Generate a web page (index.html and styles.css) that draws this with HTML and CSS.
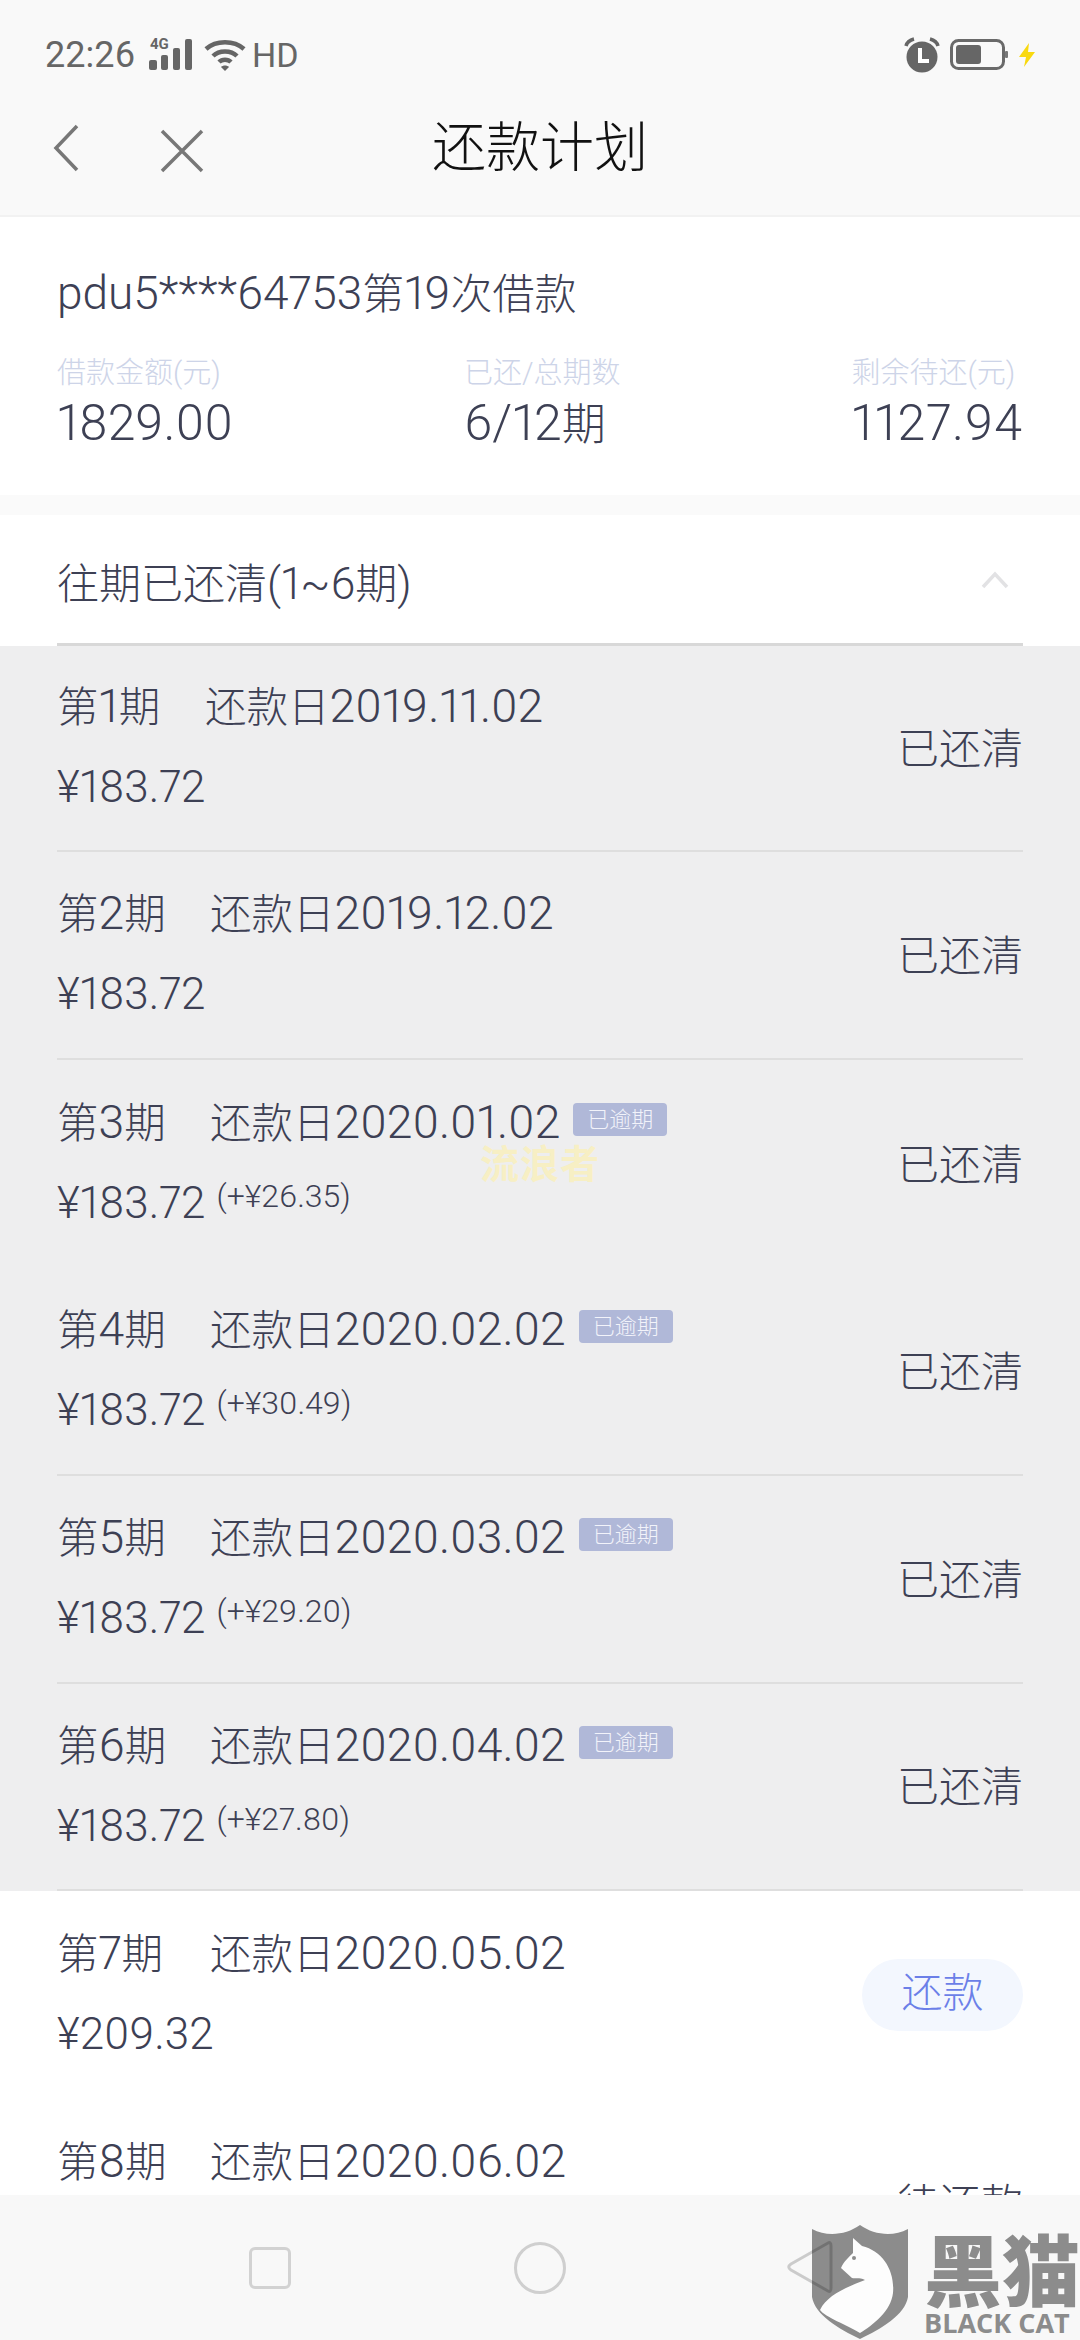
FILE: index.html
```html
<!DOCTYPE html>
<html>
<head>
	<meta charset="utf-8">
	<title>还款计划</title>
	<link rel="stylesheet" href="styles.css">
</head>
<body>
	<header class="top">
		<div class="status">
			<div class="status-left">
				<span class="time">22:26</span>
				<span class="signal">
					<span class="net">4G</span>
					<svg width="46" height="32" viewBox="0 0 46 32">
						<rect x="1" y="21" width="8" height="10" rx="2" fill="#666"/>
						<rect x="13" y="16" width="7" height="15" rx="2" fill="#666"/>
						<rect x="25" y="9" width="7" height="22" rx="2" fill="#666"/>
						<rect x="37" y="0" width="7" height="31" rx="2" fill="#666"/>
					</svg>
				</span>
				<svg class="wifi" width="42" height="32" viewBox="0 0 42 32">
					<g fill="none" stroke="#666" stroke-width="4.5">
						<path d="M2 10 C12 1 30 1 40 10"/>
						<path d="M9 17 C15 11 27 11 33 17"/>
						<path d="M15 23 C18 20 24 20 27 23"/>
					</g>
					<path d="M17 28 L21 32 L25 28 C23 26 19 26 17 28 Z" fill="#666"/>
				</svg>
				<span class="hd">HD</span>
			</div>
			<div class="status-right">
				<svg width="38" height="36" viewBox="0 0 38 36">
					<circle cx="19" cy="20" r="15.5" fill="#666"/>
					<path d="M3 9 C4 5 7 3 11 2 M35 9 C34 5 31 3 27 2" fill="none" stroke="#666" stroke-width="3.5"/>
					<path d="M17 11 V24 H26" fill="none" stroke="#fff" stroke-width="4"/>
				</svg>
				<svg class="batt" width="58" height="32" viewBox="0 0 58 32">
					<rect x="1.5" y="1.5" width="52" height="28" rx="7" fill="none" stroke="#6a6a6a" stroke-width="3"/>
					<rect x="6" y="6" width="25" height="19" rx="3" fill="#666"/>
					<rect x="55" y="12" width="3" height="7" rx="1" fill="#777"/>
				</svg>
				<svg class="bolt" width="18" height="24" viewBox="0 0 18 24">
					<path d="M11 0 L1 14 H8 L6 24 L17 9 H10 Z" fill="#f9d90f"/>
				</svg>
			</div>
		</div>
		<div class="nav-bar">
			<svg class="nav-icon" width="28" height="48" viewBox="0 0 28 48">
				<path d="M25 2 L4 24 L25 46" fill="none" stroke="#777" stroke-width="3.5"/>
			</svg>
			<svg class="nav-icon close" width="44" height="44" viewBox="0 0 44 44">
				<path d="M2 2 L42 42 M42 2 L2 42" fill="none" stroke="#777" stroke-width="3.5"/>
			</svg>
			<h1 class="title">还款计划</h1>
		</div>
	</header>

	<main class="content">
		<section class="loan">
			<h2 class="loan-name"><span class="num">pdu5****64753</span>第<span class="num">19</span>次借款</h2>
			<div class="loan-stats">
				<div class="stat">
					<div class="stat-label">借款金额(元)</div>
					<div class="stat-value">1829.00</div>
				</div>
				<div class="stat">
					<div class="stat-label">已还/总期数</div>
					<div class="stat-value">6/12<span class="unit">期</span></div>
				</div>
				<div class="stat">
					<div class="stat-label">剩余待还(元)</div>
					<div class="stat-value wide">1127.94</div>
				</div>
			</div>
		</section>

		<section class="plans">
			<div class="plans-head">
				<span>往期已还清<span class="num">(1~6</span>期<span class="num">)</span></span>
				<svg width="28" height="18" viewBox="0 0 28 18">
					<path d="M2 16 L14 3 L26 16" fill="none" stroke="#e2e2e4" stroke-width="3.5"/>
				</svg>
			</div>

			<div class="paid">
				<div class="watermark">流浪者</div>
				<div class="row first">
					<div>
						<div class="row-line"><span class="no-narrow">第<span class="num">1</span>期</span><span>还款日<span class="num">2019.11.02</span></span></div>
						<div class="row-line amount">¥183.72</div>
					</div>
					<span class="state">已还清</span>
				</div>
				<div class="row">
					<div>
						<div class="row-line"><span class="no">第<span class="num">2</span>期</span><span>还款日<span class="num">2019.12.02</span></span></div>
						<div class="row-line amount">¥183.72</div>
					</div>
					<span class="state">已还清</span>
				</div>
				<div class="row no-line">
					<div>
						<div class="row-line"><span class="no">第<span class="num">3</span>期</span><span>还款日<span class="num">2020.01.02</span></span><span class="late">已逾期</span></div>
						<div class="row-line amount">¥183.72<span class="extra">(+¥26.35)</span></div>
					</div>
					<span class="state">已还清</span>
				</div>
				<div class="row">
					<div>
						<div class="row-line"><span class="no">第<span class="num">4</span>期</span><span>还款日<span class="num">2020.02.02</span></span><span class="late">已逾期</span></div>
						<div class="row-line amount">¥183.72<span class="extra">(+¥30.49)</span></div>
					</div>
					<span class="state">已还清</span>
				</div>
				<div class="row">
					<div>
						<div class="row-line"><span class="no">第<span class="num">5</span>期</span><span>还款日<span class="num">2020.03.02</span></span><span class="late">已逾期</span></div>
						<div class="row-line amount">¥183.72<span class="extra">(+¥29.20)</span></div>
					</div>
					<span class="state">已还清</span>
				</div>
				<div class="row last">
					<div>
						<div class="row-line"><span class="no">第<span class="num">6</span>期</span><span>还款日<span class="num">2020.04.02</span></span><span class="late">已逾期</span></div>
						<div class="row-line amount">¥183.72<span class="extra">(+¥27.80)</span></div>
					</div>
					<span class="state">已还清</span>
				</div>
			</div>

			<div class="row no-line">
				<div>
					<div class="row-line"><span class="no">第<span class="num">7</span>期</span><span>还款日<span class="num">2020.05.02</span></span></div>
					<div class="row-line amount">¥209.32</div>
				</div>
				<span class="pay">还款</span>
			</div>
			<div class="row no-line">
				<div>
					<div class="row-line"><span class="no">第<span class="num">8</span>期</span><span>还款日<span class="num">2020.06.02</span></span></div>
					<div class="row-line amount">¥209.32</div>
				</div>
				<span class="state">待还款</span>
			</div>
		</section>
	</main>

	<footer class="sys-nav">
		<span class="sys-square"></span>
		<span class="sys-circle"></span>
		<div class="brand">
			<svg class="shield" width="98" height="114" viewBox="0 0 98 114">
				<path d="M1 4 C16 12 35 10 49 0 C63 10 82 12 97 4 V72 C94 90 70 104 49 114 C28 104 4 90 1 72 Z" fill="#8c8c8c"/>
				<path d="M42 13 L51 21 C72 26 84 46 82 68 C80 86 62 100 49 108 C36 100 14 92 9 85 C16 70 36 62 54 55 C48 52 44 54 41 53 L30 43 C33 36 38 32 42 28 Z" fill="#fdfdfd"/>
				<circle cx="43" cy="33" r="2" fill="#8c8c8c"/>
			</svg>
			<div class="brand-text">
				<div class="brand-cn">黑猫</div>
				<div class="brand-en">BLACK CAT</div>
			</div>
		</div>
		<svg class="sys-back" width="46" height="54" viewBox="0 0 46 54">
			<path d="M41 3 C43 2 44 3 44 6 V48 C44 51 43 52 41 51 L4 30 C1 28 1 26 4 24 Z" fill="none" stroke="#000" stroke-opacity=".18" stroke-width="3"/>
		</svg>
	</footer>
</body>
</html>
```

FILE: styles.css
```css
* {
	box-sizing: border-box;
}
html, body {
	margin: 0;
	height: 2340px;
}
body {
	display: flex;
	flex-direction: column;
	overflow: hidden;
	background: #fff;
	color: #3d4054;
	font-family: Roboto, "Noto Sans CJK SC", sans-serif;
	font-weight: 300;
	font-variant-numeric: proportional-nums;
}

/* top bars */
.top {
	flex: none;
	height: 217px;
	background: #f9f9f9;
	border-bottom: 2px solid #f2f2f2;
}
.status {
	display: flex;
	justify-content: space-between;
	align-items: center;
	height: 72px;
	padding: 37px 44px 0 45px;
	color: #666;
}
.status-left, .status-right {
	display: flex;
	align-items: center;
}
.time {
	font-size: 36px;
	font-weight: 400;
	line-height: 36px;
	margin-right: 13px;
}
.signal {
	position: relative;
	display: block;
	height: 32px;
}
.net {
	position: absolute;
	left: 2px;
	top: -2px;
	font-size: 15px;
	line-height: 15px;
	font-weight: 700;
}
.wifi {
	margin-left: 10px;
}
.hd {
	margin-left: 6px;
	font-size: 34px;
	line-height: 36px;
	font-weight: 400;
}
.batt {
	margin-left: 9px;
}
.bolt {
	margin-left: 10px;
}
.nav-bar {
	position: relative;
	display: flex;
	align-items: center;
	height: 143px;
	padding: 8px 0 0 52px;
}
.nav-icon {
	display: block;
}
.close {
	margin-left: 80px;
	margin-top: 6px;
}
.title {
	position: absolute;
	left: 0;
	right: 0;
	top: 47px;
	margin: 0;
	text-align: center;
	color: #111;
	font-size: 54px;
	font-weight: 300;
	line-height: 60px;
}

/* loan card */
.content {
	flex: 1;
	min-height: 0;
	overflow: hidden;
	background: #fafafa;
}
.loan {
	height: 278px;
	margin-bottom: 20px;
	padding: 50px 57px 0 57px;
	background: #fff;
}
.loan-name {
	margin: 0;
	font-size: 42px;
	font-weight: 300;
	line-height: 52px;
}
.loan-name .num {
	font-size: 46px;
}
.loan-stats {
	display: flex;
	justify-content: space-between;
	margin-top: 34px;
}
.stat-label {
	color: #cdd4e8;
	font-size: 29px;
	line-height: 36px;
}
.stat-value {
	margin-top: 4px;
	font-size: 50px;
	line-height: 56px;
}
.wide {
	letter-spacing: 1px;
}
.unit {
	font-size: 44px;
}

/* plan rows */
.plans {
	background: #fff;
}
.plans-head {
	display: flex;
	justify-content: space-between;
	align-items: center;
	height: 131px;
	margin: 0 57px;
	padding: 2px 14px 0 0;
	border-bottom: 3px solid #d8d8d8;
	font-size: 42px;
}
.plans-head .num {
	font-size: 44px;
}
.paid {
	position: relative;
	background: #eeeeef;
}
.row {
	display: flex;
	justify-content: space-between;
	align-items: center;
	height: 208px;
	margin: 0 57px;
	padding-bottom: 2px;
	border-bottom: 2px solid #dedede;
}
.first {
	height: 206px;
}
.last {
	height: 207px;
}
.no-line {
	border-bottom: 0;
}
.row-line {
	display: flex;
	align-items: center;
	height: 50px;
	font-size: 41.5px;
	line-height: 50px;
	white-space: nowrap;
}
.num {
	font-size: 46.3px;
}
.amount {
	margin-top: 30px;
	font-size: 44px;
}
.no {
	width: 153px;
}
.no-narrow {
	width: 148px;
}
.late {
	width: 94px;
	height: 33px;
	margin: -7px 0 0 13px;
	border-radius: 4px;
	background: #b0b8d8;
	color: #f2f3fa;
	font-size: 22px;
	line-height: 33px;
	text-align: center;
}
.extra {
	align-self: flex-start;
	margin: -5px 0 0 11px;
	font-size: 32px;
	line-height: 46px;
}
.state {
	margin-bottom: 4px;
	font-size: 42px;
}
.pay {
	width: 161px;
	height: 72px;
	margin-top: 2px;
	border-radius: 36px;
	background: #f3f7fe;
	color: #6b7fe8;
	font-size: 41px;
	line-height: 68px;
	text-align: center;
}
.watermark {
	position: absolute;
	left: 480px;
	top: 497px;
	color: #f7efc4;
	font-size: 39px;
	font-weight: 700;
	line-height: 44px;
	letter-spacing: 1px;
	white-space: nowrap;
}

/* system nav */
.sys-nav {
	position: relative;
	flex: none;
	display: flex;
	align-items: center;
	height: 145px;
	padding: 0 0 0 249px;
	background: #f8f8f8;
}
.sys-square {
	width: 42px;
	height: 42px;
	border: 3px solid #d2d2d2;
	border-radius: 6px;
}
.sys-circle {
	width: 52px;
	height: 52px;
	margin-left: 223px;
	border: 3px solid #cfcfcf;
	border-radius: 50%;
}
.brand {
	position: absolute;
	left: 811px;
	top: 30px;
	display: flex;
}
.shield {
	display: block;
}
.brand-text {
	width: 155px;
	margin-left: 15px;
	color: #8c8c8c;
	font-family: "Noto Sans CJK SC", sans-serif;
}
.brand-cn {
	font-size: 78px;
	font-weight: 900;
	line-height: 84px;
	white-space: nowrap;
}
.brand-en {
	font-family: "Open Sans", sans-serif;
	font-size: 27px;
	font-weight: 700;
	line-height: 28px;
	white-space: nowrap;
}
.sys-back {
	position: absolute;
	left: 787px;
	top: 45px;
}
```
